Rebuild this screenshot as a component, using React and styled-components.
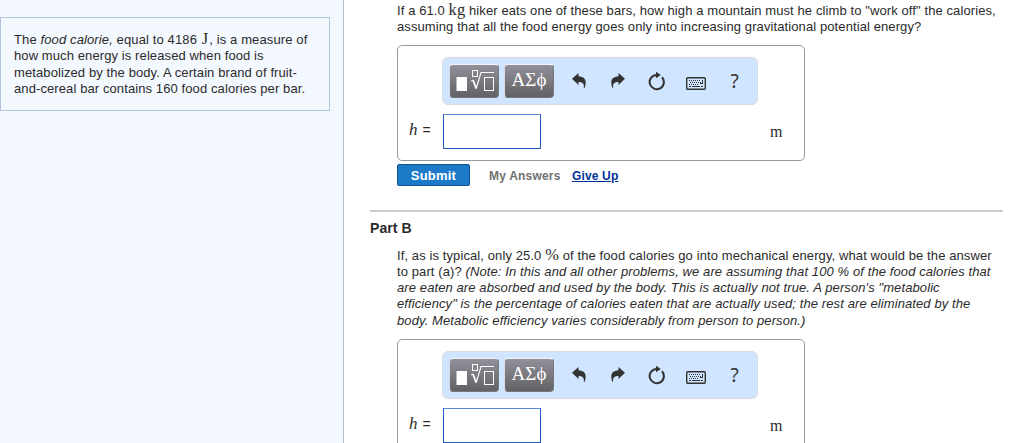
import React from "react";
import styled, { createGlobalStyle } from "styled-components";

const GlobalStyle = createGlobalStyle`
  * {
    box-sizing: border-box;
  }
  body {
    margin: 0;
    background: #fff;
    color: #2b2b2b;
    font-family: "Liberation Sans", Arial, sans-serif;
    font-size: 13px;
    overflow: hidden;
  }
`;
const Page = styled.div`
  display: flex;
  width: 1024px;
  height: 443px;
  overflow: hidden;
`;
const Sidebar = styled.aside`
  flex: none;
  width: 344px;
  padding-top: 17px;
  background: #f4f8ff;
  border-right: 1px solid #b4c0d0;
`;
const Intro = styled.div`
  width: 330px;
  height: 94px;
  padding: 14px 0 0 13px;
  border: 1px solid #b3c8df;
`;
const Main = styled.main`
  flex: none;
  width: 659px;
  padding-left: 26px;
`;
const Part = styled.section`
  padding-left: 27px;
`;
const Prompt = styled.div`
  padding-top: ${props => props.$top}px;
  height: ${props => props.$height}px;
`;
const Line = styled.div`
  height: 16.3px;
  line-height: 16.3px;
  white-space: nowrap;
  letter-spacing: ${props => props.$track || 0.1}px;
`;
const Unit = styled.span`
  margin: 0 ${props => props.$gap || 0}px;
  font-family: "Liberation Serif", "Times New Roman", serif;
  font-size: 16.5px;
  line-height: 1px;
`;
const AnswerBox = styled.div`
  width: 408px;
  height: 116px;
  padding: 11px 0 0 44px;
  border: 1px solid #999;
  border-radius: 5px;
`;
const Toolbar = styled.div`
  display: flex;
  align-items: center;
  width: 316px;
  height: 48px;
  padding-left: 6px;
  background: #d0e5ff;
  border: 1px solid #d9dbe0;
  border-radius: 6px;
`;
const PaletteButton = styled.div`
  display: flex;
  align-items: center;
  justify-content: center;
  width: 50px;
  height: 34px;
  margin-right: 5px;
  color: #fff;
  font-family: "Liberation Serif", serif;
  font-size: 19px;
  line-height: 20px;
  background: linear-gradient(#92919a, #626164);
  border: 1px solid #78777c;
  border-top-color: #f3f4f8;
  border-left-color: #d9dce4;
  border-radius: 4px;
`;
const Greek = styled.span`
  padding-bottom: 3px;
`;
const Tools = styled.div`
  display: flex;
`;
const Tool = styled.div`
  display: flex;
  align-items: center;
  justify-content: center;
  width: 39px;
  height: 34px;
  padding-top: ${props => props.$drop || 0}px;
  color: #333;
  font-family: "Noto Sans", sans-serif;
  font-size: 19px;
`;
const AnswerRow = styled.div`
  display: flex;
  align-items: center;
  height: 35px;
  margin: 9px 0 0 -33px;
`;
const Label = styled.div`
  width: 34px;
  padding-bottom: 3px;
  font-size: 14px;
  white-space: nowrap;
`;
const Variable = styled.span`
  margin-right: 1px;
  font-family: "Liberation Serif", serif;
  font-size: 17px;
  font-style: italic;
`;
const Field = styled.input`
  width: 98px;
  height: 35px;
  padding: 0 6px;
  background: #fff;
  border: 1px solid #2459c0;
  border-top-color: #5c86d6;
  outline: 0;
`;
const FieldUnit = styled.div`
  margin-left: 229px;
  font-family: "Liberation Serif", serif;
  font-size: 16px;
`;
const Actions = styled.div`
  display: flex;
  align-items: center;
  height: 22px;
  margin-top: 3px;
  font-weight: bold;
  white-space: nowrap;
`;
const Submit = styled.button`
  width: 73px;
  height: 22px;
  padding: 0;
  color: #fff;
  font: bold 13px "Liberation Sans", Arial, sans-serif;
  letter-spacing: 0.2px;
  background: #1c7ac8;
  border: 1px solid #11548e;
  border-radius: 2px;
`;
const MyAnswers = styled.span`
  width: 83px;
  margin-left: 19px;
  padding-top: 2px;
  color: #707070;
  font-size: 12px;
  letter-spacing: 0.2px;
`;
const GiveUp = styled.a`
  padding-top: 2px;
  color: #003399;
  font-size: 12px;
  letter-spacing: 0.15px;
  text-decoration: underline;
`;
const Divider = styled.div`
  width: 633px;
  height: 2px;
  margin-top: 24px;
  background: #ccc;
`;
const PartTitle = styled.h2`
  height: 32px;
  margin: 0;
  padding-top: 8px;
  font-size: 14px;
  line-height: 16px;
  letter-spacing: 0.1px;
`;

const RootIcon = () => (
  <svg width="40" height="26" viewBox="0 0 40 26" fill="none" stroke="#fff">
    <rect x="2.5" y="9" width="10.5" height="14" fill="#fff" stroke="none" />
    <rect x="18.5" y="2.5" width="5" height="6" />
    <path d="M17 13l2-1" />
    <path d="M19 12l3.2 8.5" strokeWidth="1.8" />
    <path d="M22.2 20.500L27 4.500h13" strokeWidth="1.1" />
    <rect x="30.5" y="9.5" width="9" height="13" />
  </svg>
);
const UndoIcon = () => (
  <svg width="16" height="16" viewBox="0 0 16 16" fill="#333">
    <path d="M1 5.800L7.500 0v3.300c5 .3 7.600 2.800 7.200 6.900-.1 1.900-.5 3.500-1.200 4.800h-.7c.6-4.200-.9-6-5.300-6.100v3.200z" />
  </svg>
);
const RedoIcon = () => (
  <svg width="16" height="16" viewBox="0 0 16 16" fill="#333">
    <path d="M15 5.800L8.500 0v3.300c-5 .3-7.600 2.800-7.200 6.900.1 1.900.5 3.500 1.200 4.800h.7c-.6-4.200.9-6 5.300-6.100v3.200z" />
  </svg>
);
const ResetIcon = () => (
  <svg width="18" height="20" viewBox="0 0 18 20" fill="none">
    <path
      d="M14 6.300A7.100 7.100 0 1 1 8.500 4"
      stroke="#333"
      strokeWidth="2"
    />
    <path d="M8 .8L12.800 4 8 7.200z" fill="#333" />
  </svg>
);
const KeyboardIcon = () => (
  <svg width="20" height="13" viewBox="0 0 20 13" fill="none" stroke="#333">
    <rect x=".7" y=".7" width="18.6" height="11.6" rx="1" strokeWidth="1.4" />
    <path d="M3 3.5h12M4 5.5h11M3 7.5h10" strokeDasharray="1 1" />
    <path d="M3 9.5h2M6 9.5h8M15 9.5h2M16.5 3v4M14 6.500h3" />
  </svg>
);

const Answer = () => (
  <AnswerBox>
    <Toolbar>
      <PaletteButton>
        <RootIcon />
      </PaletteButton>
      <PaletteButton>
        <Greek>ΑΣϕ</Greek>
      </PaletteButton>
      <Tools>
        <Tool>
          <UndoIcon />
        </Tool>
        <Tool>
          <RedoIcon />
        </Tool>
        <Tool>
          <ResetIcon />
        </Tool>
        <Tool $drop={4}>
          <KeyboardIcon />
        </Tool>
        <Tool>?</Tool>
      </Tools>
    </Toolbar>
    <AnswerRow>
      <Label>
        <Variable>h</Variable> =
      </Label>
      <Field />
      <FieldUnit>m</FieldUnit>
    </AnswerRow>
  </AnswerBox>
);

const App = () => {
  return (
    <Page>
      <GlobalStyle />
      <Sidebar>
        <Intro>
          <Line $track={0.12}>
            The <i>food calorie,</i> equal to 4186 <Unit $gap={1}>J</Unit>, is a
            measure of
          </Line>
          <Line>how much energy is released when food is</Line>
          <Line>metabolized by the body. A certain brand of fruit-</Line>
          <Line>and-cereal bar contains 160 food calories per bar.</Line>
        </Intro>
      </Sidebar>
      <Main>
        <Part>
          <Prompt $top={3} $height={45}>
            <Line>
              If a 61.0 <Unit>kg</Unit> hiker eats one of these bars, how high a
              mountain must he climb to "work off" the calories,
            </Line>
            <Line>
              assuming that all the food energy goes only into increasing
              gravitational potential energy?
            </Line>
          </Prompt>
          <Answer />
          <Actions>
            <Submit>Submit</Submit>
            <MyAnswers>My Answers</MyAnswers>
            <GiveUp>Give Up</GiveUp>
          </Actions>
        </Part>
        <Divider />
        <PartTitle>Part B</PartTitle>
        <Part>
          <Prompt $top={3.6} $height={95}>
            <Line>
              If, as is typical, only 25.0 <Unit>%</Unit> of the food calories
              go into mechanical energy, what would be the answer
            </Line>
            <Line>
              to part (a)?{" "}
              <i>
                (Note: In this and all other problems, we are assuming that 100
                % of the food calories that
              </i>
            </Line>
            <Line>
              <i>
                are eaten are absorbed and used by the body. This is actually
                not true. A person's "metabolic
              </i>
            </Line>
            <Line>
              <i>
                efficiency" is the percentage of calories eaten that are
                actually used; the rest are eliminated by the
              </i>
            </Line>
            <Line>
              <i>
                body. Metabolic efficiency varies considerably from person to
                person.)
              </i>
            </Line>
          </Prompt>
          <Answer />
        </Part>
      </Main>
    </Page>
  );
};

export default App;
